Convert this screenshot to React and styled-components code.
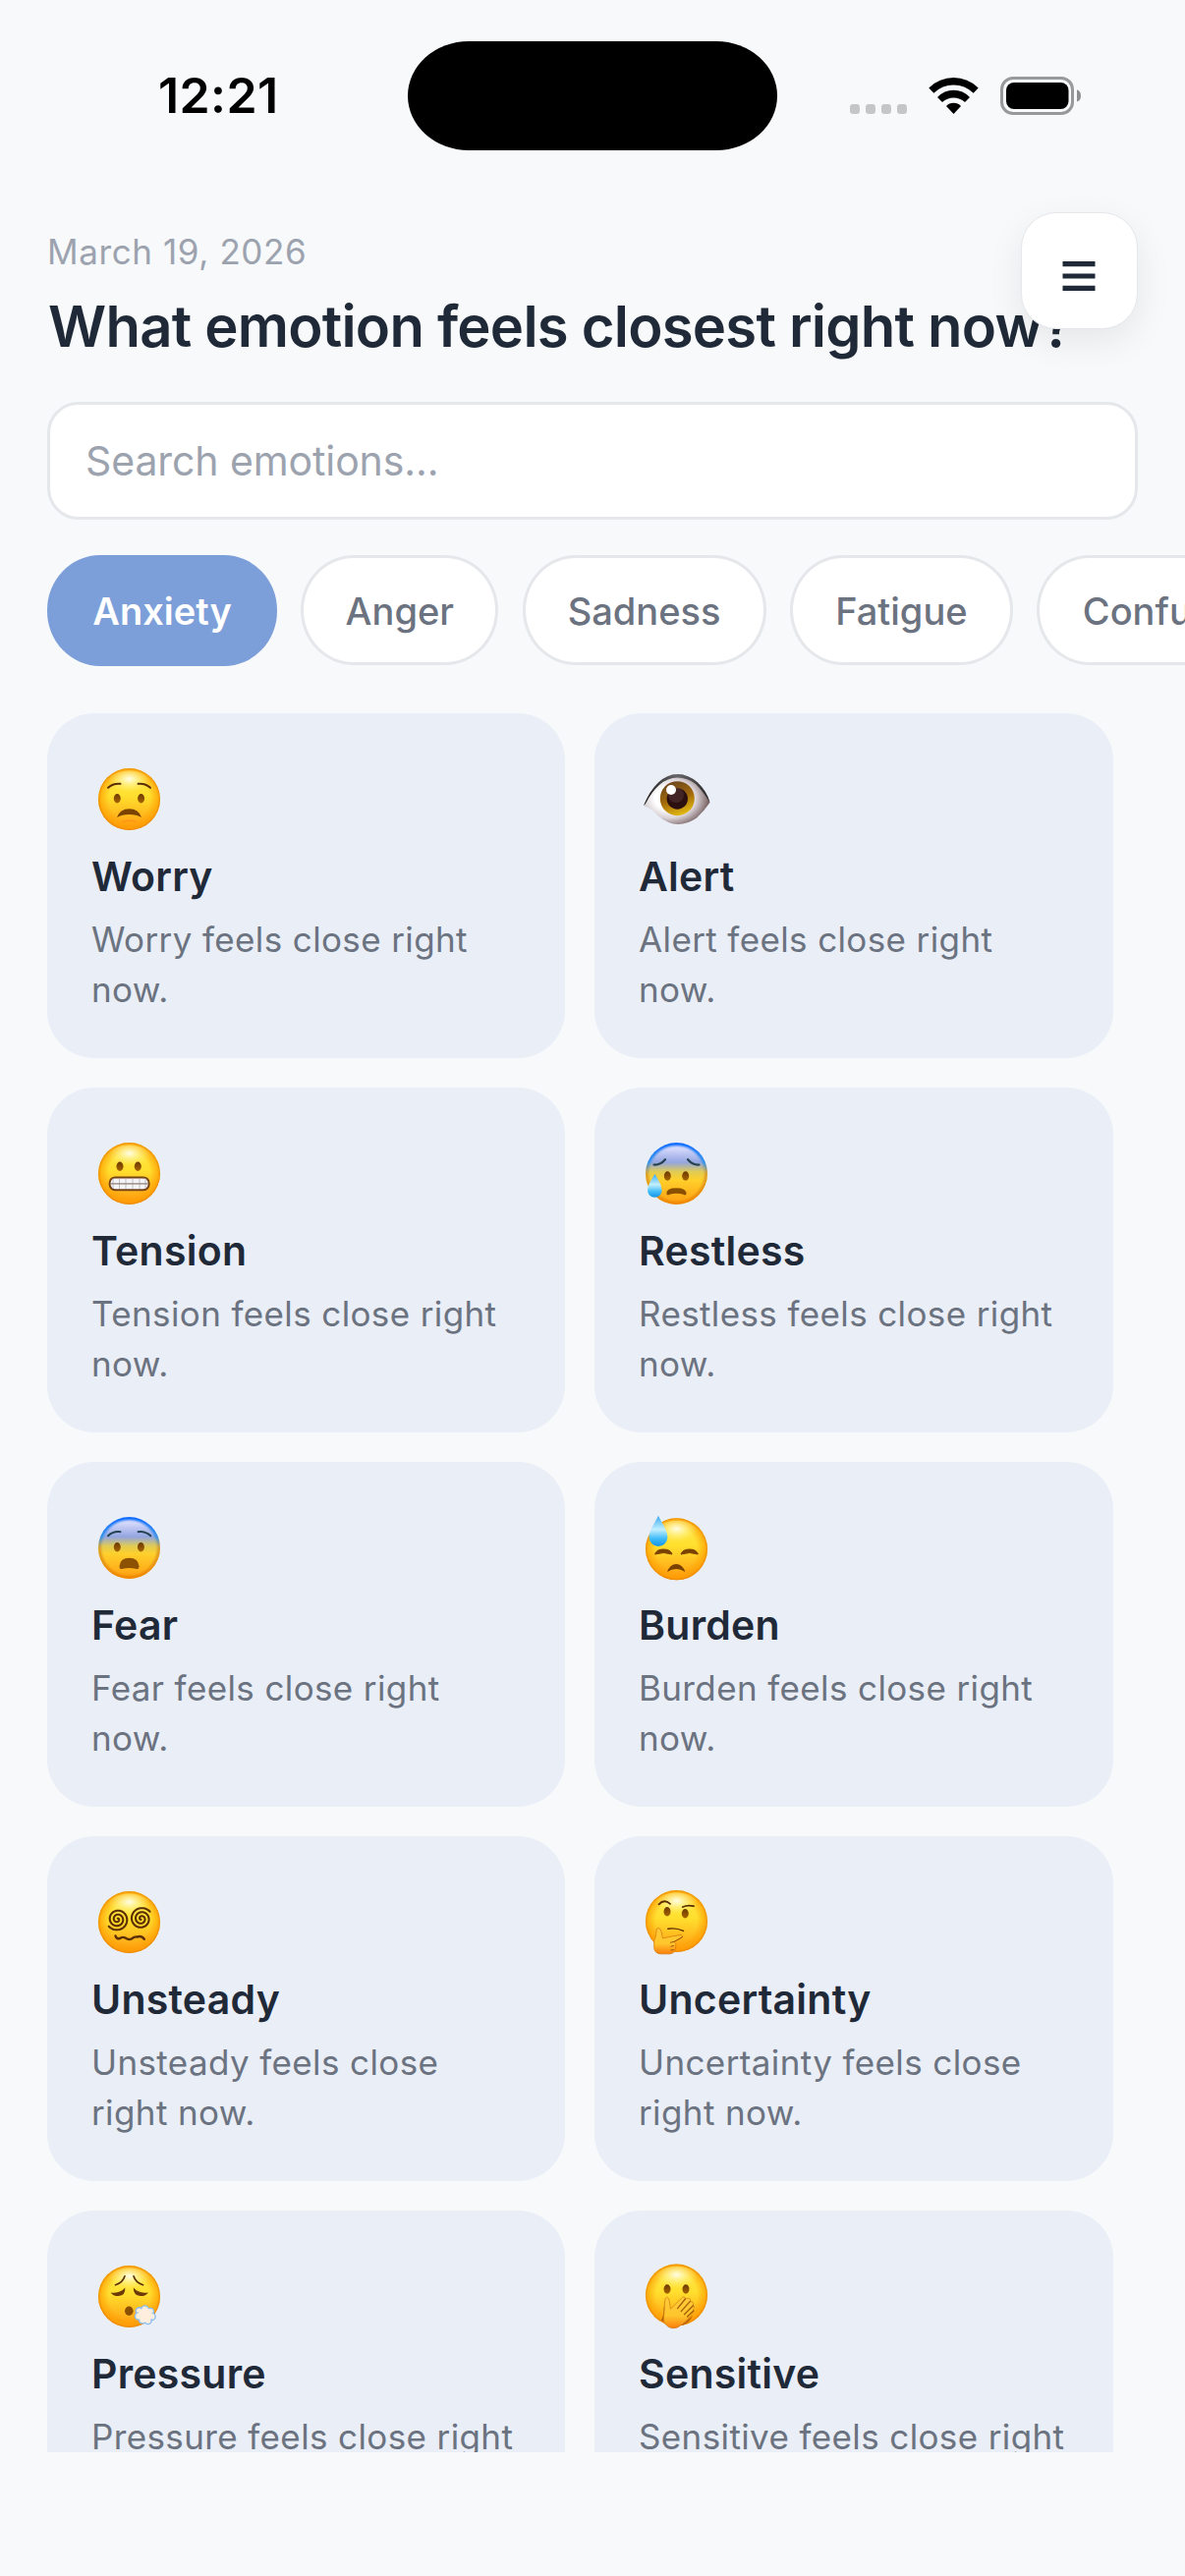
import React from "react";
import styled, { createGlobalStyle } from "styled-components";

const GlobalStyle = createGlobalStyle`
  *, *::before, *::after { box-sizing: border-box; }
  body {
    margin: 0;
    background: #f7f9fb;
    font-family: Inter, "Liberation Sans", sans-serif;
    -webkit-font-smoothing: antialiased;
  }
`;

const Screen = styled.div`
  position: relative;
  display: flex;
  flex-direction: column;
  width: 1206px;
  height: 2622px;
  overflow: hidden;
  background: #f7f9fb;

  > * {
    flex: none;
  }
`;

const StatusBar = styled.div`
  display: grid;
  grid-template-columns: 415px 376px 415px;
  align-items: start;
  height: 234px;
`;

const Clock = styled.div`
  padding: 67px 0 0 161px;
  font-size: 50px;
  font-weight: 600;
  line-height: 60px;
  letter-spacing: 0.4px;
  color: #000;
`;

const Island = styled.div`
  height: 111px;
  margin-top: 41.5px;
  border-radius: 62px / 55.5px;
  background: #000;
`;

const StatusIcons = styled.svg`
  display: block;
  width: 240px;
  height: 42px;
  margin: 76px 0 0 72px;
`;

const Header = styled.header`
  padding: 0 48px;
`;

const DateLabel = styled.div`
  font-size: 35px;
  line-height: 44px;
  letter-spacing: 0.6px;
  color: #9ca3af;
`;

const Heading = styled.h1`
  margin: 18px 0 0 1px;
  font-size: 58px;
  font-weight: 600;
  line-height: 72px;
  letter-spacing: -0.77px;
  white-space: nowrap;
  color: #1f2937;
`;

const SearchBox = styled.div`
  display: flex;
  align-items: center;
  height: 120px;
  margin: 41px 48px 0;
  padding: 0 36px;
  border: 3px solid #e5e7eb;
  border-radius: 32px;
  background: #fff;
  font-size: 41px;
  line-height: 50px;
  letter-spacing: -0.1px;
  color: #9ca3af;
`;

const Chips = styled.div`
  display: flex;
  gap: 24.3px;
  margin-top: 36px;
  padding-left: 48px;
  height: 113px;
`;

const Chip = styled.div`
  flex: none;
  display: flex;
  align-items: center;
  justify-content: center;
  width: ${(p) => p.$width}px;
  height: ${(p) => (p.$active ? 113 : 112)}px;
  padding-top: ${(p) => (p.$active ? 0 : 1)}px;
  border: 3px solid ${(p) => (p.$active ? "#7c9ed9" : "#e5e7eb")};
  border-radius: 54px / 56px;
  background: ${(p) => (p.$active ? "#7c9ed9" : "#fff")};
  color: ${(p) => (p.$active ? "#fff" : "#6b7280")};
  font-size: 38px;
  font-weight: ${(p) => (p.$active ? 600 : 500)};
  line-height: 46px;
`;

const Grid = styled.main`
  display: grid;
  grid-template-columns: 527px 528px;
  grid-auto-rows: 351px;
  gap: 30px;
  height: 1770px;
  margin-top: 48px;
  padding-left: 48px;
  overflow: hidden;
`;

const Card = styled.article`
  padding: 52px 45px 0;
  border-radius: 48px;
  background: #e9eef7;
`;

const Emoji = styled.svg`
  display: block;
  width: 76px;
  height: 72px;
  overflow: visible;
`;

const CardTitle = styled.h2`
  margin: 17px 0 14px;
  font-size: 41px;
  font-weight: 600;
  line-height: 50px;
  letter-spacing: 0.25px;
  color: #1f2937;
`;

const CardText = styled.p`
  margin: 0;
  font-size: 35px;
  line-height: 51px;
  letter-spacing: 0.38px;
  color: #6b7280;
`;

const MenuButton = styled.button`
  position: absolute;
  top: 216px;
  right: 48.5px;
  display: grid;
  place-items: center;
  width: 119px;
  height: 119px;
  padding: 11px 0 0;
  border: 1px solid #e5e7eb;
  border-radius: 36px;
  background: #fff;
  box-shadow: 0 12px 36px rgba(0, 0, 0, 0.08);
`;

const Defs = styled.svg`
  position: absolute;
`;

const Face = ({ cy = 35.5, blue }) => (
  <>
    <circle cx="38.5" cy={cy} r="31.5" fill={blue ? "url(#blueFace)" : "url(#face)"} />
    {blue ? (
      <g clipPath="url(#faceClip)">
        <circle cx="38.5" cy={cy} r="30.6" fill="none" stroke="url(#rimColor)" strokeWidth="4" filter="url(#soft)" />
      </g>
    ) : (
      <>
        <circle cx="38.5" cy={cy} r="31.5" fill="url(#rim)" />
        <ellipse cx="38.5" cy={cy - 15} rx="22" ry="14" fill="url(#shine)" />
      </>
    )}
  </>
);

const Eyes = ({ l, r, y, yr = y }) => (
  <>
    <ellipse cx={l} cy={y} rx="3.5" ry="4.7" fill="url(#eye)" />
    <ellipse cx={r} cy={yr} rx="3.5" ry="4.7" fill="url(#eye)" />
  </>
);

const Stroke = ({ d, w = 2, c = "#5b2e05" }) => (
  <path d={d} fill="none" stroke={c} strokeWidth={w} strokeLinecap="round" strokeLinejoin="round" />
);

// side is 1 for a spiral that opens at the lower left, -1 for one that opens at the upper right
const spiral = (cx, cy, side) => {
  const turns = Math.PI * 5.2;
  const end = Math.PI * 0.78;
  const pts = [];
  for (let i = 0; i <= 90; i += 1) {
    const a = end - turns + (i / 90) * turns;
    const r = side * (0.8 + (i / 90) * 10.6);
    pts.push(`${(cx + r * Math.cos(a)).toFixed(2)} ${(cy + r * Math.sin(a)).toFixed(2)}`);
  }
  return `M${pts.join("L")}`;
};

const drawings = {
  worry: (
    <>
      <Face />
      <Stroke d="M17 23.8Q22 19 29.5 19.8M47.6 19.8Q55 19 60 23.8" />
      <Eyes l={26.3} r={50.6} y={34.7} />
      <path d="M26 54Q29 45.3 38.5 45.3T51 54Q46 51 38.5 51T26 54Z" fill="#7a4300" />
      <Stroke d="M32 58.5Q38.5 56 45 58.5" w={1.6} c="#ff9417" />
    </>
  ),
  alert: (
    <>
      <path d="M5 42Q11 27 20 18.5Q29 10 39.6 10T60 18.5Q69 27 72.5 38.7Q67 47 59 54.5Q50 61 40 61T20 52.5Q12 44 5 42Z" fill="url(#eyeball)" />
      <path d="M5 42Q11 27 20 18.5Q29 10 39.6 10T60 18.5Q69 27 72.5 38.7Q65 27 58 20Q50 13.5 39.6 13.5T21 21Q13 28 7 40Z" fill="url(#lid)" />
      <circle cx="39.3" cy="34.7" r="17.5" fill="url(#iris)" />
      <circle cx="39.3" cy="35" r="10.7" fill="#2c1010" />
      <circle cx="38" cy="31" r="8" fill="#6b4a48" opacity=".35" />
      <circle cx="33" cy="26" r="5" fill="#fff" />
    </>
  ),
  tension: (
    <>
      <Face />
      <Eyes l={29} r={47.3} y={28.3} />
      <rect x="18.6" y="39.4" width="40" height="12.8" rx="5.6" fill="#f4f4f6" stroke="#754316" strokeWidth="2" />
      <path d="M22 40.5v10.5M28.5 40.5v10.5M35 40.5v10.5M42 40.5v10.5M49 40.5v10.5M55 40.5v10.5" stroke="#b9b9bf" strokeWidth=".9" />
      <path d="M19.5 45.8h38" stroke="#8f7f78" strokeWidth="1.2" />
    </>
  ),
  restless: (
    <>
      <Face blue />
      <Stroke d="M15.5 26.5Q22 27 27 21.2M50 21.2Q55 27 61.5 26.5" w={2.2} c="#24424f" />
      <Eyes l={29.3} r={47.7} y={38} />
      <path d="M28.3 56Q28 50.3 38.3 50.3T48.6 56Q48 58.4 45.5 56.8Q38.3 54.8 31.5 56.8Q29 58.4 28.3 56Z" fill="#8a5000" />
      <path d="M16.4 36Q23.7 47 23.7 52.5A7.3 7.3 0 0 1 9 52.5Q9 47 16.4 36Z" fill="url(#drop)" />
    </>
  ),
  fear: (
    <>
      <Face blue />
      <Stroke d="M17 23.3Q22 18.3 29.5 19.2M47.6 19.2Q55 18.3 60.3 23.3" w={2} c="#24424f" />
      <Eyes l={26.3} r={50.4} y={34.7} />
      <path d="M28.5 54Q29.5 45.7 38.5 45.7T48.6 54Q48.5 58 45 56.8Q38.5 55.2 32 56.8Q28.5 58 28.5 54Z" fill="#8d5103" />
    </>
  ),
  burden: (
    <>
      <Face cy={36.8} />
      <path d="M16.6 42Q18 37 25.3 37T34 42Q25.3 39 16.6 42ZM43 42Q44.5 37 51.7 37T60.4 42Q51.7 39 43 42Z" fill="#7a4100" stroke="#7a4100" strokeWidth="1" strokeLinejoin="round" />
      <path d="M29 60Q32 52 38.2 52T47.4 60Q43 57 38.2 57T29 60Z" fill="#7a4100" />
      <path d="M20 2.7C22.5 8 29.4 17.5 29.4 24.6A9.4 9.4 0 0 1 10.6 24.6C10.6 17.5 17.5 8 20 2.7Z" fill="url(#drop)" />
    </>
  ),
  unsteady: (
    <>
      <Face />
      <Stroke d={spiral(26.5, 32.5, 1)} w={2.1} />
      <Stroke d={spiral(50.8, 32, -1)} w={2.1} />
      <Stroke d="M24.5 49.5Q25.5 53 29 52Q32 50 34.5 51.5Q38 54 40.8 52.5Q44 50 46.5 50.5Q51 49 53.8 52.8" w={2.4} />
    </>
  ),
  uncertainty: (
    <>
      <Face cy={34.5} />
      <Stroke d="M20.5 17.3Q26 11.5 32 16.8M44.8 20Q50 17.6 56 19.2" w={1.8} />
      <Eyes l={29} r={47.3} y={24.7} yr={26.7} />
      <Stroke d="M29.8 42.3Q37.5 40.8 45.5 44.4" w={1.4} />
      <path d="M20 41.5Q22.5 41.5 23.3 46L24.3 51.8Q33 50 43 48.4Q46.2 49 43.5 51.6L36 55.5Q39 57 37.6 60Q38.5 66.5 32 67.8H22.5Q16 67.5 15.7 61V54Q17.5 52 18 43.5Q18.2 41.6 20 41.5Z" fill="url(#hand)" stroke="#d97a0b" strokeWidth=".8" />
      <Stroke d="M44.5 50.5L36 55.4L32.5 56.2M35.5 59.5L33 60.2M35.5 63.5L33 64" w={1} c="#9a560a" />
    </>
  ),
  pressure: (
    <>
      <Face />
      <Stroke d="M24.5 23.7Q32 21.5 34 14.8M43 14.8Q45 21.5 52.6 23.7" w={1.7} />
      <path d="M19.6 31.4Q29 33 34.3 26.6Q35 34.5 27.5 35Q22 35 19.6 31.4ZM42.8 26.6Q48 33 58 31.4Q55.5 35 50 35Q42.5 34.5 42.8 26.6Z" fill="#6b3a06" />
      <ellipse cx="38.3" cy="50.3" rx="4.3" ry="4.7" fill="#8a5000" />
      <g fill="#fdeede" stroke="#8bbdf2" strokeWidth="1.4">
        <circle cx="49" cy="50.5" r="3.8" />
        <circle cx="54.5" cy="48.5" r="3.6" />
        <circle cx="60" cy="51" r="3.6" />
        <circle cx="61.5" cy="56" r="3.6" />
        <circle cx="57.5" cy="60" r="3.6" />
        <circle cx="52" cy="59.5" r="3.4" />
        <circle cx="48" cy="55.5" r="3.6" />
      </g>
      <circle cx="54.6" cy="54.4" r="7.3" fill="#fdeede" />
    </>
  ),
  sensitive: (
    <>
      <Face cy={34} />
      <Eyes l={29} r={48} y={28} />
      <path d="M22.6 60Q26 54 25.4 48L27 40L34 64ZM44 64L55 55Q52 62.5 44 65Z" fill="#9a4c00" opacity=".7" />
      <path d="M28.6 36Q31 36.6 31.4 41L32.4 48.2L44.6 36.2Q47.4 35 47.4 38L50.8 37.2Q53.6 37.6 52.2 40.6Q56.4 40.6 55.4 44Q57.6 45.8 55.6 48.4L56 51Q54 54 51.5 56Q50 60 44 64Q39 68.4 34.2 67.8Q28 67 25.3 60L26.2 48Q26 36.5 28.6 36Z" fill="url(#hand)" stroke="#c8700c" strokeWidth=".6" />
      <Stroke d="M47.4 38L39.6 47.6M52.2 40.6L43.2 50.6M55.4 44.8L46.5 53.8M55.8 50L49.4 56" w={1.3} c="#a65c08" />
    </>
  ),
};

const EmojiDefs = () => (
  <Defs width="0" height="0" aria-hidden="true">
    <defs>
      <clipPath id="faceClip">
        <circle cx="38.5" cy="35.5" r="31.5" />
      </clipPath>
      <filter id="soft" x="-20%" y="-20%" width="140%" height="140%">
        <feGaussianBlur stdDeviation="1" />
      </filter>
      <linearGradient id="face" x1="0" y1="0" x2="0" y2="1">
        <stop offset="0" stopColor="#ffe94d" />
        <stop offset=".45" stopColor="#ffdf2e" />
        <stop offset="1" stopColor="#ff9a10" />
      </linearGradient>
      <radialGradient id="rim">
        <stop offset=".66" stopColor="#ff9a00" stopOpacity="0" />
        <stop offset=".92" stopColor="#ff9d00" stopOpacity=".65" />
        <stop offset="1" stopColor="#e88300" stopOpacity=".95" />
      </radialGradient>
      <radialGradient id="shine" cy=".3">
        <stop offset="0" stopColor="#fffef0" stopOpacity=".95" />
        <stop offset="1" stopColor="#fff36b" stopOpacity="0" />
      </radialGradient>
      <linearGradient id="blueFace" x1="0" y1="0" x2="0" y2="1">
        <stop offset="0" stopColor="#e4e4ff" />
        <stop offset=".1" stopColor="#d4d8fb" />
        <stop offset=".32" stopColor="#93a5e0" />
        <stop offset=".47" stopColor="#e0cb55" />
        <stop offset=".6" stopColor="#ffd02b" />
        <stop offset="1" stopColor="#ff9d12" />
      </linearGradient>
      <linearGradient id="rimColor" x1="0" y1="0" x2="0" y2="1">
        <stop offset="0" stopColor="#0062ff" />
        <stop offset=".32" stopColor="#2f95ed" />
        <stop offset=".5" stopColor="#dc9d28" />
        <stop offset="1" stopColor="#ee8600" />
      </linearGradient>
      <linearGradient id="eye" x1="0" y1="0" x2="0" y2="1">
        <stop offset="0" stopColor="#6d3a00" />
        <stop offset="1" stopColor="#a66300" />
      </linearGradient>
      <linearGradient id="drop" x1="0" y1="0" x2="0" y2="1">
        <stop offset="0" stopColor="#35aaf0" />
        <stop offset=".45" stopColor="#c4efff" />
        <stop offset=".75" stopColor="#3fbcf8" />
        <stop offset="1" stopColor="#1593e6" />
      </linearGradient>
      <linearGradient id="hand" x1="0" y1="0" x2="0" y2="1">
        <stop offset="0" stopColor="#ffc93a" />
        <stop offset=".6" stopColor="#ffc62c" />
        <stop offset="1" stopColor="#fb7d0c" />
      </linearGradient>
      <radialGradient id="eyeball" cx=".4" cy=".48" r=".58">
        <stop offset=".4" stopColor="#fff" />
        <stop offset=".68" stopColor="#d9d2d6" />
        <stop offset="1" stopColor="#7d6667" />
      </radialGradient>
      <linearGradient id="lid" x1="0" y1="0" x2="1" y2="0">
        <stop offset="0" stopColor="#1d1b1b" />
        <stop offset=".5" stopColor="#67676a" />
        <stop offset="1" stopColor="#2b2a2a" />
      </linearGradient>
      <linearGradient id="iris" x1=".3" y1="0" x2=".65" y2="1">
        <stop offset="0" stopColor="#6b4620" />
        <stop offset=".5" stopColor="#a2690a" />
        <stop offset="1" stopColor="#e6bd13" />
      </linearGradient>
    </defs>
  </Defs>
);

const chips = [
  { label: "Anxiety", width: 234, active: true },
  { label: "Anger", width: 201 },
  { label: "Sadness", width: 248 },
  { label: "Fatigue", width: 227 },
  { label: "Confusion", width: 280 },
];

const emotions = [
  "Worry",
  "Alert",
  "Tension",
  "Restless",
  "Fear",
  "Burden",
  "Unsteady",
  "Uncertainty",
  "Pressure",
  "Sensitive",
];

export default function App() {
  return (
    <Screen>
      <GlobalStyle />
      <EmojiDefs />
      <StatusBar>
        <Clock>12:21</Clock>
        <Island />
        <StatusIcons viewBox="863 76 240 42">
          <g fill="#c5c6c8">
            <rect x="865" y="106" width="10" height="10" rx="3.2" />
            <rect x="881" y="106" width="10" height="10" rx="3.2" />
            <rect x="897" y="106" width="10" height="10" rx="3.2" />
            <rect x="913" y="106" width="10" height="10" rx="3.2" />
          </g>
          <path d="M945.3 89.5Q956 79 970.5 79T995.7 89.5L990.7 94.7Q982 86.4 970.5 86.4T950.3 94.7ZM954 99Q961 91.8 970.5 91.8T987 99L982 104Q977 99.4 970.5 99.4T959 104ZM963 108Q966 104.8 970.5 104.8T978 108L970.5 116Z" fill="#000" />
          <rect x="1019.5" y="79.5" width="72" height="36" rx="11.5" fill="none" stroke="#98999b" strokeWidth="3" />
          <rect x="1024" y="84" width="63.5" height="27" rx="8" fill="#000" />
          <path d="M1096 91.2Q1100 92.5 1100 97.4T1096 103.5Z" fill="#8e8f91" />
        </StatusIcons>
      </StatusBar>
      <Header>
        <DateLabel>March 19, 2026</DateLabel>
        <Heading>What emotion feels closest right now?</Heading>
      </Header>
      <SearchBox>Search emotions...</SearchBox>
      <Chips>
        {chips.map((c) => (
          <Chip key={c.label} $width={c.width} $active={c.active}>
            {c.label}
          </Chip>
        ))}
      </Chips>
      <Grid>
        {emotions.map((name) => (
          <Card key={name}>
            <Emoji viewBox="0 0 76 72">{drawings[name.toLowerCase()]}</Emoji>
            <CardTitle>{name}</CardTitle>
            <CardText>{`${name} feels close right now.`}</CardText>
          </Card>
        ))}
      </Grid>
      <MenuButton aria-label="Menu">
        <svg width="34" height="32" viewBox="0 0 34 32">
          <path d="M.5 3.6h33M.5 16h33M.5 28.4h33" stroke="#1f2937" strokeWidth="5.2" />
        </svg>
      </MenuButton>
    </Screen>
  );
}
